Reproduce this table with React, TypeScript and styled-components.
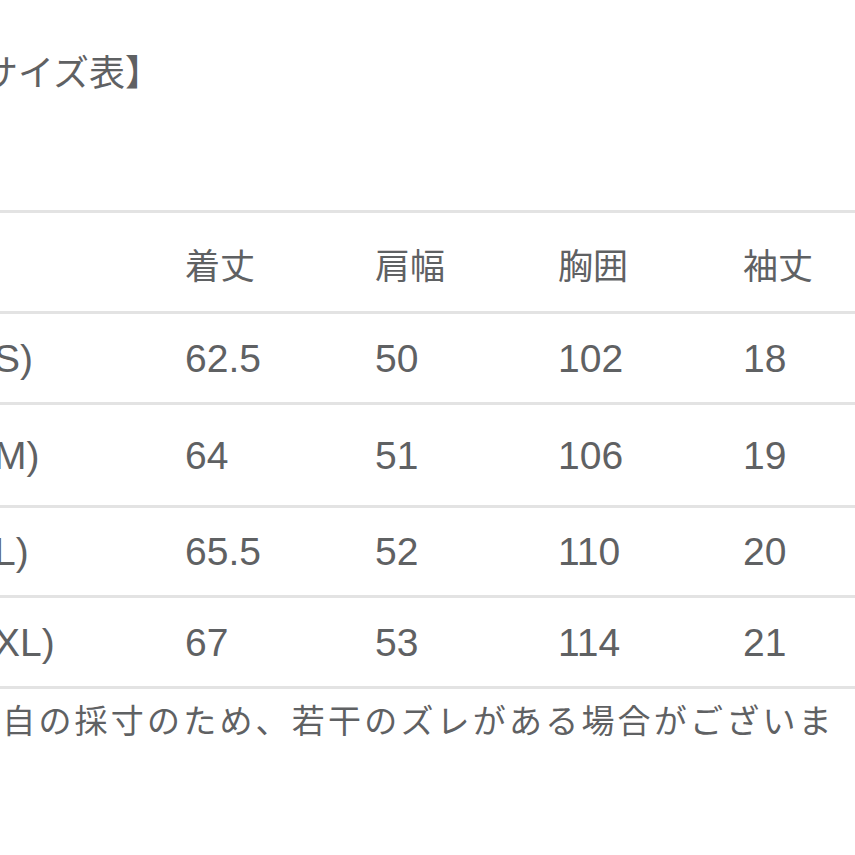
import React from "react";
import styled, { createGlobalStyle } from "styled-components";

const Global = createGlobalStyle`
  html, body { margin: 0; padding: 0; background: #fff; overflow: hidden; }
  body { width: 855px; height: 855px; }
`;

const FONT = `"Liberation Sans", "Noto Sans CJK JP", sans-serif`;

const Page = styled.div`
  width: 915px;
  margin-left: -60px;
  font-family: ${FONT};
  color: #5f6163;
  white-space: nowrap;
`;

const Title = styled.div`
  padding: 47px 0 0 6px;
  height: 210px;
  box-sizing: border-box;
  font-size: 36px;
  line-height: 46px;
  font-family: "Noto Sans CJK JP", sans-serif;
`;

const Table = styled.div`
  display: flex;
  flex-direction: column;
  border-bottom: 3px solid #e3e3e3;
`;

const Row = styled.div<{ $h: number }>`
  display: grid;
  grid-template-columns: 245px 190px 183px 185px 1fr;
  align-items: center;
  height: ${(p) => p.$h}px;
  box-sizing: border-box;
  border-top: 3px solid #e3e3e3;
`;

const HeadCell = styled.div`
  font-family: "Noto Sans CJK JP", sans-serif;
  font-size: 35px;
  line-height: 1;
  padding-top: 2px;
`;

const Cell = styled.div<{ $label?: boolean }>`
  font-size: 39px;
  line-height: 1;
  padding-left: ${(p) => (p.$label ? "41px" : "0")};
`;

const Note = styled.div`
  padding: 8px 0 0 26px;
  font-family: "Noto Sans CJK JP", sans-serif;
  font-size: 33px;
  letter-spacing: 3.2px;
  line-height: 44px;
`;

const heads = ["着丈", "肩幅", "胸囲", "袖丈"];
const rows: { label: string; vals: string[]; h: number }[] = [
  { label: "(S)", vals: ["62.5", "50", "102", "18"], h: 91 },
  { label: "(M)", vals: ["64", "51", "106", "19"], h: 103 },
  { label: "(L)", vals: ["65.5", "52", "110", "20"], h: 90 },
  { label: "(XL)", vals: ["67", "53", "114", "21"], h: 91 },
];

export default function App() {
  return (
    <>
      <Global />
      <Page>
        <Title>【サイズ表】</Title>
        <Table>
          <Row $h={101}>
            <div />
            {heads.map((h) => (
              <HeadCell key={h}>{h}</HeadCell>
            ))}
          </Row>
          {rows.map((r) => (
            <Row key={r.label} $h={r.h}>
              <Cell $label>{r.label}</Cell>
              {r.vals.map((v, i) => (
                <Cell key={i}>{v}</Cell>
              ))}
            </Row>
          ))}
        </Table>
        <Note>独自の採寸のため、若干のズレがある場合がございま</Note>
      </Page>
    </>
  );
}
